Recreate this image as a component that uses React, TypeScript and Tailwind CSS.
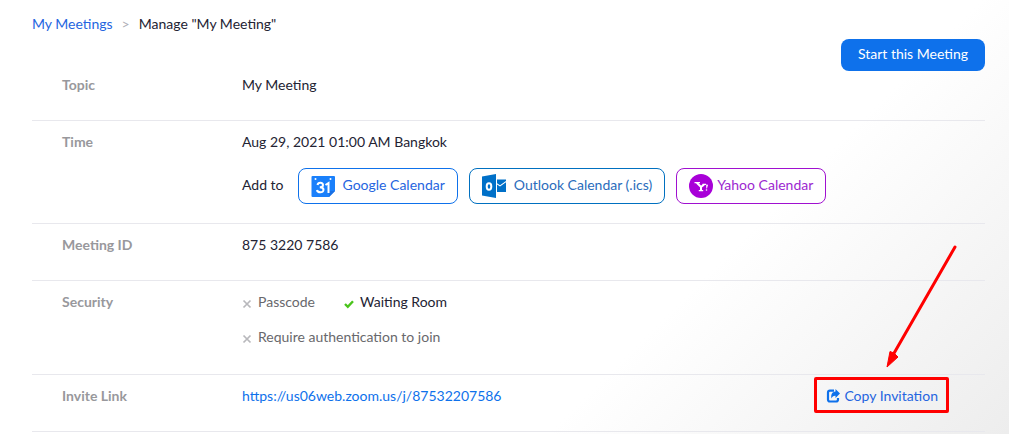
import type { ReactNode } from "react";

interface RowProps {
  label: string;
  className?: string;
  children: ReactNode;
}

const row = "flex border-b border-[#e8e8ed] pl-[30px]";
const calendar =
  "flex h-9 items-center rounded-lg border bg-white px-3 whitespace-nowrap";

const Row = ({ label, className = "pt-[11px] pb-[25px]", children }: RowProps) => (
  <div className={`${row} ${className}`}>
    <dt className="w-[180px] shrink-0 font-bold text-[#98989c]">{label}</dt>
    <dd className="min-w-0 flex-1">{children}</dd>
  </div>
);

const GoogleIcon = () => (
  <svg width="24" height="24" viewBox="0 0 24 24" aria-hidden="true">
    <path d="M0.500 3Q0.500 2 1.500 2H23Q24 2 24 3V17L18 23H1.500Q0.500 23 0.500 22Z" fill="#1a80fb" />
    <path d="M18 23V17H24Z" fill="#1a70e4" />
    <circle cx="4.500" cy="5" r="1" fill="#fff" />
    <circle cx="19.500" cy="5" r="1" fill="#fff" />
    <path
      d="M6.500 11C7 8.300 12 8 12 11C12 13 10 13.300 8.800 13.300C10.500 13.300 12.500 13.600 12.500 15.800C12.500 19.300 6.500 19 6 16M14.500 11L17.500 9V19"
      fill="none"
      stroke="#fff"
      strokeWidth="2"
    />
  </svg>
);

const OutlookIcon = () => (
  <svg width="24" height="24" viewBox="0 0 24 24" aria-hidden="true">
    <path d="M0 2.500L14 0V24L0 21.500Z" fill="#0070c8" />
    <path d="M15 5.500H24V7L18 11.200L15 9.200Z" fill="#0070c8" />
    <path d="M15 10.500L18 12.500L24 8.300V18H15Z" fill="#0070c8" />
    <ellipse
      cx="7"
      cy="12.500"
      rx="2.300"
      ry="3.200"
      fill="none"
      stroke="#fff"
      strokeWidth="2"
    />
  </svg>
);

const YahooIcon = () => (
  <svg width="24" height="24" viewBox="0 0 24 24" aria-hidden="true">
    <circle cx="12" cy="12" r="12" fill="#a800d8" />
    <path
      d="M5.500 8.600H11M13.500 10.400H17M9.800 16.600H14.200"
      fill="none"
      stroke="#fff"
      strokeWidth="1.200"
    />
    <path
      d="M7.800 8.800L12 13L15 10.600M12 12.500V16.500"
      fill="none"
      stroke="#fff"
      strokeWidth="2"
    />
    <path d="M17.200 10.500L19 10.800L18 14.500H17.300Z" fill="#fff" />
    <circle cx="17.500" cy="16" r="0.800" fill="#fff" />
  </svg>
);

const CrossIcon = () => (
  <svg
    className="mt-[3px] shrink-0"
    width="10"
    height="10"
    viewBox="0 0 10 10"
    aria-hidden="true"
  >
    <path d="M1.500 1.500L8.500 8.500M8.500 1.500L1.500 8.500" stroke="#b8b8bc" strokeWidth="1.700" />
  </svg>
);

const CheckIcon = () => (
  <svg
    className="mt-[3px] shrink-0"
    width="10"
    height="10"
    viewBox="0 0 10 10"
    aria-hidden="true"
  >
    <path d="M1 5L3.800 7.800L9 2.200" fill="none" stroke="#4ac41c" strokeWidth="2.400" />
  </svg>
);

const ShareIcon = () => (
  <svg width="14" height="14" viewBox="0 0 14 14" aria-hidden="true">
    <path
      d="M8 1.700H4Q2 1.700 2 3.700V10.500Q2 12.500 4 12.500H10Q12 12.500 12 10.500V9"
      fill="none"
      stroke="#0e71eb"
      strokeWidth="2.200"
    />
    <path d="M9.500 0L14 4.500L9.500 9V6.700C7.500 6.500 6.300 7.500 5.500 9.500C4.600 5.500 6 2.600 9.500 2.400Z" fill="#0e71eb" />
  </svg>
);

const CopyInvitation = () => (
  <div className="relative mr-[47px] shrink-0">
    <button type="button" className="flex items-center gap-1 text-[#2565e0]">
      <ShareIcon />
      Copy Invitation
    </button>
    <div className="pointer-events-none absolute -top-[9px] -right-[11px] -bottom-[7px] -left-3 rounded-xs border-3 border-[#ff0000]" />
    <svg
      className="pointer-events-none absolute -right-5 bottom-full mb-[17px]"
      width="72"
      height="124"
      viewBox="0 0 72 124"
      aria-hidden="true"
    >
      <path d="M69 2L7 110" stroke="#ff0000" strokeWidth="3" strokeLinecap="round" />
      <path d="M1 122L4 106.500L8 108L12 112Z" fill="#ff0000" stroke="#ff0000" strokeLinejoin="round" />
    </svg>
  </div>
);

export default function App() {
  return (
    <main className="min-h-screen bg-linear-135 from-white from-68% to-[#ededed] pr-6 pl-8 font-[Lato,'Liberation_Sans',sans-serif] text-sm leading-5 text-[#232333]">
      <header className="flex items-start justify-between pt-[14px]">
        <nav aria-label="Breadcrumb" className="flex">
          <a href="#meetings" className="text-[#2565e0]">
            My Meetings
          </a>
          <span className="mx-[9px] text-[#b0b0b8]">&gt;</span>
          <span>Manage "My Meeting"</span>
        </nav>
        <button
          type="button"
          className="mt-[25px] h-8 rounded-lg bg-[#0e71eb] px-[17px] pb-[2px] text-white"
        >
          Start this Meeting
        </button>
      </header>

      <dl>
        <Row label="Topic" className="pt-1 pb-[25px]">
          My Meeting
        </Row>
        <Row label="Time" className="pt-[11px] pb-[19px]">
          <p>Aug 29, 2021 01:00 AM Bangkok</p>
          <div className="mt-4 flex items-center">
            <span className="mr-[14px] pb-[2px]">Add to</span>
            <div className="flex gap-[11px]">
              <a href="#google" className={`${calendar} gap-2 border-[#0e71eb] text-[#2565e0]`}>
                <GoogleIcon />
                <span className="pb-[2px]">Google Calendar</span>
              </a>
              <a href="#outlook" className={`${calendar} gap-2 border-[#0070c0] text-[#2a6cbc]`}>
                <OutlookIcon />
                <span className="pb-[2px]">Outlook Calendar (.ics)</span>
              </a>
              <a href="#yahoo" className={`${calendar} gap-1 border-[#a010d0] text-[#9c28d0]`}>
                <YahooIcon />
                <span className="pb-[2px]">Yahoo Calendar</span>
              </a>
            </div>
          </div>
        </Row>
        <Row label="Meeting ID">875 3220 7586</Row>
        <Row label="Security" className="pt-[11px] pb-[27px]">
          <div className="flex gap-[29px]">
            <span className="flex items-center gap-[6px] text-[#68686c]">
              <CrossIcon />
              Passcode
            </span>
            <span className="flex items-center gap-[6px]">
              <CheckIcon />
              Waiting Room
            </span>
          </div>
          <div className="mt-[15px] flex items-center gap-[6px] text-[#68686c]">
            <CrossIcon />
            Require authentication to join
          </div>
        </Row>
        <Row label="Invite Link">
          <div className="flex justify-between">
            <a href="#join" className="text-[#0e71eb]">
              https://us06web.zoom.us/j/87532207586
            </a>
            <CopyInvitation />
          </div>
        </Row>
      </dl>
    </main>
  );
}
